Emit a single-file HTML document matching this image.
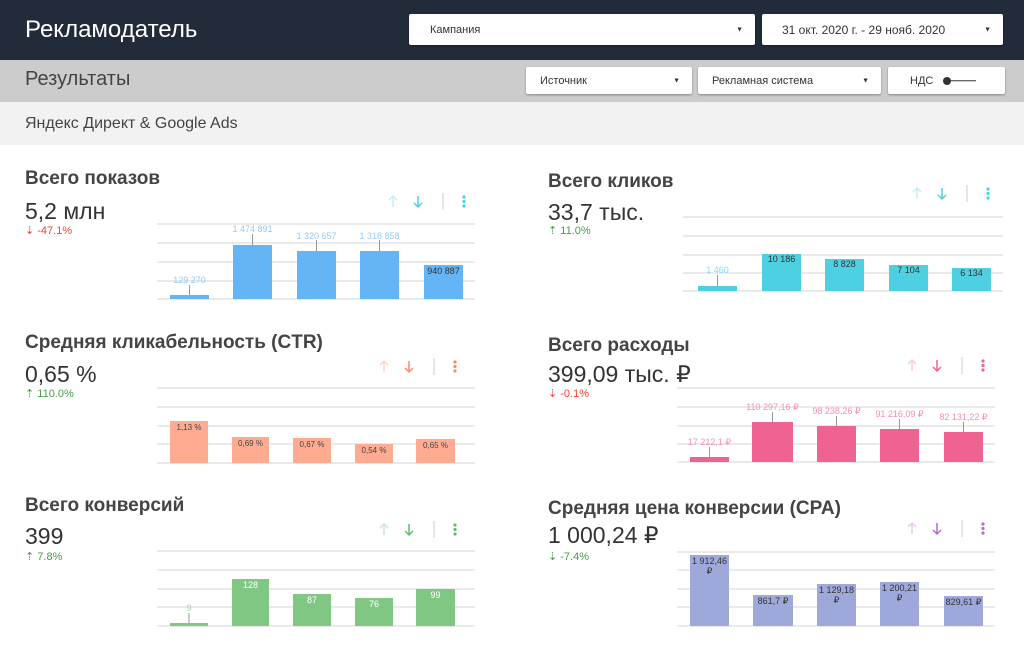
<!DOCTYPE html>
<html><head><meta charset="utf-8"><style>
*{margin:0;padding:0;box-sizing:border-box}
body{width:1024px;height:655px;overflow:hidden;background:#fff;font-family:"Liberation Sans",sans-serif;position:relative}
.a{position:absolute;white-space:nowrap}
.dd{position:absolute;background:#fff;font-size:11px;color:#333;box-shadow:0 1px 2px rgba(0,0,0,.35);border-radius:2px}
.dd span{position:absolute;top:50%;transform:translateY(-50%)}
.t{position:absolute;font-size:19px;font-weight:bold;color:#444}
.v{position:absolute;font-size:23px;color:#333}
.d{position:absolute;font-size:11px}
</style></head><body>
<div class="a" style="left:0;top:0;width:1024px;height:60px;background:#222b3a"></div>
<div class="a" style="left:25px;top:16px;font-size:24px;color:#fff">Рекламодатель</div>
<div class="dd" style="left:409px;top:14px;width:346px;height:31px"><span style="left:21px">Кампания</span><span style="right:12px;font-size:7px">▼</span></div>
<div class="dd" style="left:762px;top:14px;width:241px;height:31px"><span style="left:20px;font-size:12px">31 окт. 2020 г. - 29 нояб. 2020</span><span style="right:12px;font-size:7px">▼</span></div>
<div class="a" style="left:0;top:60px;width:1024px;height:42px;background:#cccccc"></div>
<div class="a" style="left:25px;top:68px;font-size:20px;color:#444">Результаты</div>
<div class="dd" style="left:526px;top:67px;width:166px;height:27px"><span style="left:14px">Источник</span><span style="right:12px;font-size:7px">▼</span></div>
<div class="dd" style="left:698px;top:67px;width:183px;height:27px"><span style="left:14px">Рекламная система</span><span style="right:12px;font-size:7px">▼</span></div>
<div class="dd" style="left:888px;top:67px;width:117px;height:27px"><span style="left:22px">НДС</span><span style="left:55px;width:8px;height:8px;border-radius:50%;background:#333"></span><span style="left:60px;width:28px;height:1.5px;background:#333"></span></div>
<div class="a" style="left:0;top:102px;width:1024px;height:43px;background:#f2f2f2"></div>
<div class="a" style="left:25px;top:115px;font-size:16px;color:#444">Яндекс Директ &amp; Google Ads</div>

<div class="t" style="left:25px;top:168px">Всего показов</div>
<div class="v" style="left:25px;top:198px">5,2 млн</div>
<div class="d" style="left:25px;top:224px;color:#f44336">⇣ -47.1%</div>

<div class="t" style="left:548px;top:171px">Всего кликов</div>
<div class="v" style="left:548px;top:199px">33,7 тыс.</div>
<div class="d" style="left:548px;top:224px;color:#43a047">⇡ 11.0%</div>

<div class="t" style="left:25px;top:332px">Средняя кликабельность (CTR)</div>
<div class="v" style="left:25px;top:361px">0,65 %</div>
<div class="d" style="left:25px;top:387px;color:#43a047">⇡ 110.0%</div>

<div class="t" style="left:548px;top:335px">Всего расходы</div>
<div class="v" style="left:548px;top:361px">399,09 тыс. ₽</div>
<div class="d" style="left:548px;top:387px;color:#f44336">⇣ -0.1%</div>

<div class="t" style="left:25px;top:495px">Всего конверсий</div>
<div class="v" style="left:25px;top:523px">399</div>
<div class="d" style="left:25px;top:550px;color:#43a047">⇡ 7.8%</div>

<div class="t" style="left:548px;top:498px">Средняя цена конверсии (CPA)</div>
<div class="v" style="left:548px;top:522px">1 000,24 ₽</div>
<div class="d" style="left:548px;top:550px;color:#43a047">⇣ -7.4%</div>

<svg class="a" style="left:0;top:0" width="1024" height="655" font-family="Liberation Sans,sans-serif" font-size="9" text-anchor="middle">
<defs>
<g id="ic">
<path d="M0 6 V-5 M-4 -1 L0 -5 L4 -1" fill="none" stroke-width="1.5" opacity=".35"/>
<path d="M25 -5 V6 M21 2 L25 6 L29 2" fill="none" stroke-width="1.5"/>
<line x1="50" y1="-8" x2="50" y2="9" stroke="#ccc" stroke-width="1"/>
<circle cx="71" cy="-4" r="1.6" stroke="none"/><circle cx="71" cy="0.5" r="1.6" stroke="none"/><circle cx="71" cy="5" r="1.6" stroke="none"/>
</g>
</defs>
<g stroke="#e3e3e3" stroke-width="1.5">
<path d="M157 224H475M157 243H475M157 262H475M157 281H475M157 299H475"/>
<path d="M683 217H1003M683 236H1003M683 255H1003M683 273H1003M683 291H1003"/>
<path d="M157 388H475M157 407H475M157 426H475M157 444H475M157 463H475"/>
<path d="M677 388H995M677 407H995M677 426H995M677 444H995M677 462H995"/>
<path d="M157 551H475M157 570H475M157 589H475M157 607H475M157 626H475"/>
<path d="M677 552H995M677 570H995M677 589H995M677 607H995M677 626H995"/>
</g>
<g stroke="#4dd0e1" fill="#4dd0e1"><use href="#ic" x="393" y="201"/><use href="#ic" x="917" y="193"/></g>
<g stroke="#ff8a65" fill="#ff8a65"><use href="#ic" x="384" y="366"/></g>
<g stroke="#f06292" fill="#f06292"><use href="#ic" x="912" y="365"/></g>
<g stroke="#66bb6a" fill="#66bb6a"><use href="#ic" x="384" y="529"/></g>
<g stroke="#ba68c8" fill="#ba68c8"><use href="#ic" x="912" y="528"/></g>

<!-- chart 1 -->
<g fill="#64b5f6"><rect x="170" y="295" width="39" height="4"/><rect x="233" y="245" width="39" height="54"/><rect x="297" y="251" width="39" height="48"/><rect x="360" y="251" width="39" height="48"/><rect x="424" y="265" width="39" height="34"/></g>
<g stroke="#999"><path d="M189.5 285V295M252.5 234V245M316.5 240V251M379.5 240V251"/></g>
<g fill="#90caf9"><text x="189.5" y="283">129 270</text><text x="252.5" y="232">1 474 891</text><text x="316.5" y="239">1 320 657</text><text x="379.5" y="239">1 318 858</text></g>
<text x="443.5" y="274" fill="#333">940 887</text>
<!-- chart 2 -->
<g fill="#4dd0e1"><rect x="698" y="286" width="39" height="5"/><rect x="762" y="254" width="39" height="37"/><rect x="825" y="259" width="39" height="32"/><rect x="889" y="265" width="39" height="26"/><rect x="952" y="268" width="39" height="23"/></g>
<path d="M717.5 275V286" stroke="#999"/><text x="717.5" y="273" fill="#80deea">1 460</text>
<g fill="#333"><text x="781.5" y="262">10 186</text><text x="844.5" y="267">8 828</text><text x="908.5" y="273">7 104</text><text x="971.5" y="276">6 134</text></g>
<!-- chart 3 -->
<g fill="#ffab91"><rect x="170" y="421" width="38" height="42"/><rect x="232" y="437" width="37" height="26"/><rect x="293" y="438" width="38" height="25"/><rect x="355" y="444" width="38" height="19"/><rect x="416" y="439" width="39" height="24"/></g>
<g fill="#444" font-size="8"><text x="189" y="430">1,13 %</text><text x="250.5" y="446">0,69 %</text><text x="312" y="447">0,67 %</text><text x="374" y="453">0,54 %</text><text x="435.5" y="448">0,65 %</text></g>
<!-- chart 4 -->
<g fill="#f06292"><rect x="690" y="457" width="39" height="5"/><rect x="752" y="422" width="41" height="40"/><rect x="817" y="426" width="39" height="36"/><rect x="880" y="429" width="39" height="33"/><rect x="944" y="432" width="39" height="30"/></g>
<g stroke="#999"><path d="M709.5 447V457M772.5 412V422M836.5 416V426M899.5 419V429M963.5 422V432"/></g>
<g fill="#f48fb1"><text x="709.5" y="445">17 212,1 ₽</text><text x="772.5" y="410">110 297,16 ₽</text><text x="836.5" y="414">98 238,26 ₽</text><text x="899.5" y="417">91 216,09 ₽</text><text x="963.5" y="420">82 131,22 ₽</text></g>
<!-- chart 5 -->
<g fill="#81c784"><rect x="170" y="623" width="38" height="3"/><rect x="232" y="579" width="37" height="47"/><rect x="293" y="594" width="38" height="32"/><rect x="355" y="598" width="38" height="28"/><rect x="416" y="589" width="39" height="37"/></g>
<path d="M189 613V623" stroke="#999"/><text x="189" y="611" fill="#a5d6a7">9</text>
<g fill="#fff"><text x="250.5" y="588">128</text><text x="312" y="603">87</text><text x="374" y="607">76</text><text x="435.5" y="598">99</text></g>
<!-- chart 6 -->
<g fill="#9fa8da"><rect x="690" y="555" width="39" height="71"/><rect x="753" y="595" width="40" height="31"/><rect x="817" y="584" width="39" height="42"/><rect x="880" y="582" width="39" height="44"/><rect x="944" y="596" width="39" height="30"/></g>
<g fill="#333"><text x="709.5" y="564">1 912,46</text><text x="709.5" y="574">₽</text><text x="773" y="604">861,7 ₽</text><text x="836.5" y="593">1 129,18</text><text x="836.5" y="603">₽</text><text x="899.5" y="591">1 200,21</text><text x="899.5" y="601">₽</text><text x="963.5" y="605">829,61 ₽</text></g>
</svg>
</body></html>
